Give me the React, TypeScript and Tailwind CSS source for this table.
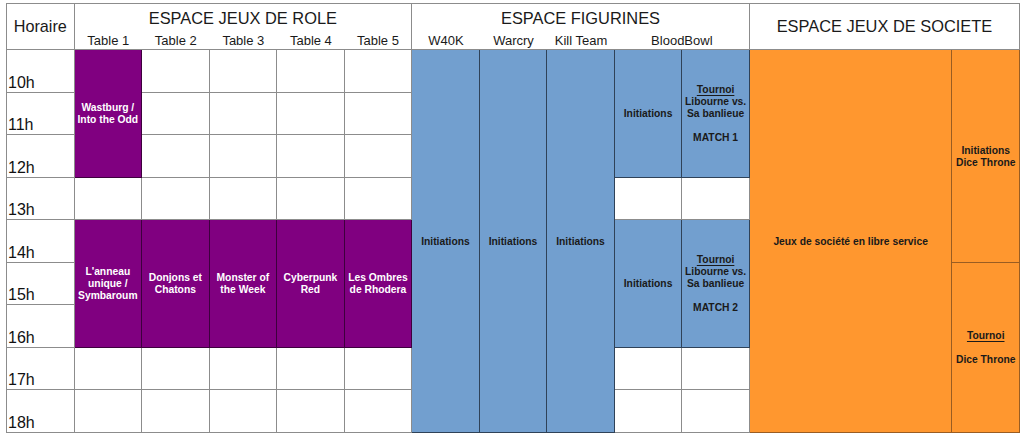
const GRID = 'border-[#8c8c8c]'

type Slot = {
  pos: string
  tone: 'purple' | 'blue' | 'orange'
  lines: { text: string; under?: boolean }[]
}

const TONES = {
  purple: 'bg-[#800080] border-[#3d003d] text-white',
  blue: 'bg-[#729fcf] border-[#2f4258] text-[#1a1a1a]',
  orange: 'bg-[#ff972f] border-[#9a5d22] text-[#1a1a1a]',
}

const HOURS = ['10h', '11h', '12h', '13h', '14h', '15h', '16h', '17h', '18h']

const HOUR_POS = [
  'row-start-3',
  'row-start-4',
  'row-start-5',
  'row-start-6',
  'row-start-7',
  'row-start-8',
  'row-start-9',
  'row-start-10',
  'row-start-11',
]

const SLOTS: Slot[] = [
  // jeux de role
  { pos: 'col-start-2 row-start-3 row-span-3', tone: 'purple', lines: [{ text: 'Wastburg /' }, { text: 'Into the Odd' }] },
  { pos: 'col-start-2 row-start-7 row-span-3', tone: 'purple', lines: [{ text: "L'anneau" }, { text: 'unique /' }, { text: 'Symbaroum' }] },
  { pos: 'col-start-3 row-start-7 row-span-3', tone: 'purple', lines: [{ text: 'Donjons et' }, { text: 'Chatons' }] },
  { pos: 'col-start-4 row-start-7 row-span-3', tone: 'purple', lines: [{ text: 'Monster of' }, { text: 'the Week' }] },
  { pos: 'col-start-5 row-start-7 row-span-3', tone: 'purple', lines: [{ text: 'Cyberpunk' }, { text: 'Red' }] },
  { pos: 'col-start-6 row-start-7 row-span-3', tone: 'purple', lines: [{ text: 'Les Ombres' }, { text: 'de Rhodera' }] },
  // figurines
  { pos: 'col-start-7 row-start-3 row-span-9', tone: 'blue', lines: [{ text: 'Initiations' }] },
  { pos: 'col-start-8 row-start-3 row-span-9', tone: 'blue', lines: [{ text: 'Initiations' }] },
  { pos: 'col-start-9 row-start-3 row-span-9', tone: 'blue', lines: [{ text: 'Initiations' }] },
  { pos: 'col-start-10 row-start-3 row-span-3', tone: 'blue', lines: [{ text: 'Initiations' }] },
  {
    pos: 'col-start-11 row-start-3 row-span-3',
    tone: 'blue',
    lines: [{ text: 'Tournoi', under: true }, { text: 'Libourne vs.' }, { text: 'Sa banlieue' }, { text: '' }, { text: 'MATCH 1' }],
  },
  { pos: 'col-start-10 row-start-7 row-span-3', tone: 'blue', lines: [{ text: 'Initiations' }] },
  {
    pos: 'col-start-11 row-start-7 row-span-3',
    tone: 'blue',
    lines: [{ text: 'Tournoi', under: true }, { text: 'Libourne vs.' }, { text: 'Sa banlieue' }, { text: '' }, { text: 'MATCH 2' }],
  },
  // jeux de societe
  { pos: 'col-start-12 col-span-3 row-start-3 row-span-9', tone: 'orange', lines: [{ text: 'Jeux de société en libre service' }] },
  { pos: 'col-start-15 row-start-3 row-span-5', tone: 'orange', lines: [{ text: 'Initiations' }, { text: 'Dice Throne' }] },
  { pos: 'col-start-15 row-start-8 row-span-4', tone: 'orange', lines: [{ text: 'Tournoi', under: true }, { text: '' }, { text: 'Dice Throne' }] },
]

// 135 cases horaires - 102 occupées = cases vides, placées automatiquement
const EMPTY_COUNT = 33

function Label({ children, className }: { children: React.ReactNode; className: string }) {
  return <div className={`flex items-center justify-center text-[#1a1a1a] ${className}`}>{children}</div>
}

export default function App() {
  return (
    <div className="w-[1024px] h-[436px] bg-white overflow-hidden pt-[3px] pl-[6px] font-['Liberation_Sans',Arial,sans-serif]">
      <div className={`w-[1014px] grid grid-cols-15 grid-rows-[28px_18px_repeat(9,42.5px)] border-t border-l ${GRID}`}>
        {/* En-têtes */}
        <Label className={`col-start-1 row-start-1 row-span-2 border-r border-b ${GRID} text-[16.2px]`}>Horaire</Label>
        <Label className={`col-start-2 col-span-5 row-start-1 border-r ${GRID} text-[16.4px] pt-[1px]`}>ESPACE JEUX DE ROLE</Label>
        <Label className={`col-start-2 row-start-2 border-b ${GRID} text-[13px]`}>Table 1</Label>
        <Label className={`col-start-3 row-start-2 border-b ${GRID} text-[13px]`}>Table 2</Label>
        <Label className={`col-start-4 row-start-2 border-b ${GRID} text-[13px]`}>Table 3</Label>
        <Label className={`col-start-5 row-start-2 border-b ${GRID} text-[13px]`}>Table 4</Label>
        <Label className={`col-start-6 row-start-2 border-b border-r ${GRID} text-[13px]`}>Table 5</Label>
        <Label className={`col-start-7 col-span-5 row-start-1 border-r ${GRID} text-[16.4px] pt-[1px]`}>ESPACE FIGURINES</Label>
        <Label className={`col-start-7 row-start-2 border-b ${GRID} text-[13px]`}>W40K</Label>
        <Label className={`col-start-8 row-start-2 border-b ${GRID} text-[13px]`}>Warcry</Label>
        <Label className={`col-start-9 row-start-2 border-b ${GRID} text-[13px]`}>Kill Team</Label>
        <Label className={`col-start-10 col-span-2 row-start-2 border-b border-r ${GRID} text-[13px]`}>BloodBowl</Label>
        <Label className={`col-start-12 col-span-4 row-start-1 row-span-2 border-r border-b ${GRID} text-[16.4px]`}>
          ESPACE JEUX DE SOCIETE
        </Label>

        {/* Heures */}
        {HOURS.map((h, i) => (
          <div
            key={h}
            className={`col-start-1 ${HOUR_POS[i]} border-r border-b ${GRID} flex items-end pl-[1px] text-[16px] leading-[18px] text-[#111]`}
          >
            {h}
          </div>
        ))}

        {/* Créneaux */}
        {SLOTS.map((s, i) => (
          <div
            key={i}
            className={`${s.pos} ${TONES[s.tone]} border-r border-b flex flex-col items-center justify-center pt-[2px] text-center font-bold text-[10.3px] leading-[12px]`}
          >
            {s.lines.map((l, j) => (
              <span key={j} className={l.under ? 'underline underline-offset-[2px]' : ''}>
                {l.text || '\u00a0'}
              </span>
            ))}
          </div>
        ))}

        {Array.from({ length: EMPTY_COUNT }).map((_, i) => (
          <div key={`e${i}`} className={`bg-white border-r border-b ${GRID}`} />
        ))}
      </div>
    </div>
  )
}
